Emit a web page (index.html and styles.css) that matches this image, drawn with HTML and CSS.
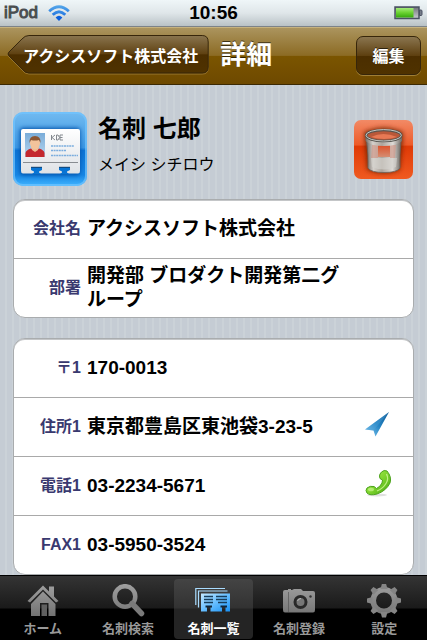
FILE: index.html
```html
<!DOCTYPE html>
<html lang="ja">
<head>
<meta charset="utf-8">
<meta name="viewport" content="width=device-width, initial-scale=1">
<title>詳細</title>
<link rel="stylesheet" href="styles.css">
</head>
<body>
<div class="app">
  <div class="status">
    <div class="carrier">
      <span>iPod</span>
      <svg class="wifi" viewBox="0 0 22 16" aria-hidden="true">
        <defs><linearGradient id="wf" x1="0" y1="0" x2="0" y2="16" gradientUnits="userSpaceOnUse"><stop offset="0" stop-color="#57a9ea"/><stop offset="1" stop-color="#0b5fdc"/></linearGradient></defs>
        <g fill="none" stroke="url(#wf)" stroke-width="2.800"><path d="M1.200 6.200Q11-2.800 20.800 6.200"/><path d="M4.700 9.800Q11 3.600 17.300 9.800"/></g>
        <path d="M7.600 12.500Q11 9 14.400 12.500L11 16Z" fill="#0b5fdc"/>
      </svg>
    </div>
    <span class="clock">10:56</span>
    <svg class="battery" viewBox="0 0 29 14" aria-hidden="true">
      <defs>
        <linearGradient id="bg" x1="0" y1="0" x2="0" y2="1"><stop offset="0" stop-color="#a5ea7c"/><stop offset=".45" stop-color="#6fd435"/><stop offset="1" stop-color="#35a80c"/></linearGradient>
        <linearGradient id="be" x1="0" y1="0" x2="0" y2="1"><stop offset="0" stop-color="#6f7277"/><stop offset="1" stop-color="#c9ccd2"/></linearGradient>
      </defs>
      <rect x="1" y="1" width="24" height="11.500" fill="url(#be)" stroke="#4a5162" stroke-width="1.500"/>
      <rect x="2" y="2" width="17.500" height="9.500" fill="url(#bg)"/>
      <path d="M25.500 4h1.500q1 0 1 1v3.500q0 1-1 1h-1.500z" fill="#777d89" stroke="#4a5162"/>
    </svg>
  </div>

  <header class="nav">
    <button class="back" type="button">
      <svg class="back-shape" viewBox="0 0 203 40" preserveAspectRatio="none" aria-hidden="true">
        <defs><linearGradient id="bk" x1="0" y1="0" x2="0" y2="1"><stop offset="0" stop-color="#8a754f"/><stop offset=".5" stop-color="#5e4010"/><stop offset=".51" stop-color="#4b2e00"/><stop offset="1" stop-color="#4f3200"/></linearGradient></defs>
        <path d="M22 2H196Q202 2 202 8V33Q202 39 196 39H22Q18 39 15 35L2 22Q0 20 2 18L15 6Q18 2 22 2Z" fill="none" stroke="#b49450" stroke-opacity=".6"/>
        <path d="M22 .5H196Q202 .5 202 7V32Q202 38 196 38H22Q18 38 15 34L2 21Q0 19 2 17L15 4Q18 .5 22 .5Z" fill="url(#bk)" stroke="#37260a"/>
      </svg>
      <span class="back-label">アクシスソフト株式会社</span>
    </button>
    <h1 class="title">詳細</h1>
    <button class="edit" type="button">編集</button>
  </header>

  <main class="content">
    <section class="profile">
      <svg class="card-icon" viewBox="0 0 74 74" role="img" aria-label="名刺">
        <defs>
          <linearGradient id="ci" x1="0" y1="0" x2="0" y2="1"><stop offset="0" stop-color="#72baf0"/><stop offset=".48" stop-color="#3b98e4"/><stop offset=".52" stop-color="#0b73d4"/><stop offset=".85" stop-color="#1686e4"/><stop offset="1" stop-color="#41b4ff"/></linearGradient>
          <linearGradient id="cp" x1="0" y1="0" x2="0" y2="1"><stop offset="0" stop-color="#fff"/><stop offset="1" stop-color="#dfe2e6"/></linearGradient>
          <linearGradient id="ph" x1="0" y1="0" x2="0" y2="1"><stop offset="0" stop-color="#79acd9"/><stop offset="1" stop-color="#b6d5ee"/></linearGradient>
          <filter id="cs" x="-20%" y="-20%" width="140%" height="150%"><feGaussianBlur stdDeviation="2"/></filter>
        </defs>
        <rect width="74" height="74" rx="10" fill="url(#ci)"/>
        <rect x="1" y="1" width="72" height="72" rx="9" fill="none" stroke="#72c5ff" stroke-width="2" stroke-opacity=".7"/>
        <rect x="7" y="16" width="60" height="47" rx="3" fill="#0350a8" filter="url(#cs)"/>
        <path d="M10 17H65Q67 17 67 19V59Q67 61.500 65 61.500H10Q8 61.500 8 59V19Q8 17 10 17Z" fill="url(#cp)"/>
        <path d="M10 50.500H65" stroke="#888c91"/>
        <path d="M18 55H29V58L26 59.500V60.500L28 62H19L21 60.500V59.500L18 58ZM46 55H57V58L54 59.500V60.500L56 62H47L49 60.500V59.500L46 58Z" fill="#0874d4"/>
        <path d="M18 55.300H29M46 55.300H57" stroke="#15436f"/>
        <rect x="12" y="21" width="20" height="24" fill="url(#ph)"/>
        <path d="M12.500 45V41Q13 38 18 36.500L22 39L26 36.500Q31 38 31.500 41V45Z" fill="#c4282e"/>
        <path d="M18 35H26L25 38L22 40L19 38Z" fill="#efba91"/>
        <ellipse cx="22" cy="31" rx="5" ry="6.500" fill="#f3c39b"/>
        <path d="M16.500 31Q16 24 22 24Q28 24 27.500 31L26 28Q22 29 18 28Z" fill="#8a5634"/>
        <g fill="none" stroke="#84898f"><path d="M38.500 23v5M42 23l-3 2.500 3 2.500M43.500 23v5h1.500q3-2.500 0-5zM50 23h-3v5h3M47 25.500h2.500"/></g>
        <path d="M38 34H61M38 38.500H53M38 43.500H65" stroke="#7badde" stroke-width="1.500" stroke-dasharray="2 .6"/>
      </svg>
      <div class="who">
        <h2 class="name">名刺 七郎</h2>
        <p class="kana">メイシ シチロウ</p>
      </div>
      <button class="trash" type="button" aria-label="削除">
        <svg viewBox="0 0 59 59" aria-hidden="true">
          <defs>
            <linearGradient id="tr" x1="0" y1="0" x2="0" y2="1"><stop offset="0" stop-color="#f28a66"/><stop offset=".42" stop-color="#ed5b29"/><stop offset=".45" stop-color="#df3a06"/><stop offset="1" stop-color="#f05a20"/></linearGradient>
            <linearGradient id="tb" x1="0" y1="0" x2="1" y2="0"><stop offset="0" stop-color="#716b66"/><stop offset=".2" stop-color="#d5d1cc"/><stop offset=".45" stop-color="#aca49c"/><stop offset=".75" stop-color="#dedbd7"/><stop offset="1" stop-color="#6d6963"/></linearGradient>
            <linearGradient id="tg" x1="0" y1="0" x2="0" y2="1"><stop offset="0" stop-color="#dc4f27"/><stop offset="1" stop-color="#d58d72"/></linearGradient>
            <filter id="ts" x="-30%" y="-30%" width="160%" height="160%"><feGaussianBlur stdDeviation="2"/></filter>
          </defs>
          <rect width="59" height="59" rx="7" fill="url(#tr)"/>
          <path d="M10 12Q30 3 49 12V20L46 50Q30 57 13 50Z" fill="#6d2005" opacity=".8" filter="url(#ts)"/>
          <path d="M12.500 20H47Q45.500 36 46 48Q43 52.500 30 52.500Q17 52.500 14 48Q14.500 36 12.500 20Z" fill="url(#tb)" stroke="#69625c" stroke-width=".8"/>
          <rect x="24" y="25" width="12" height="12" fill="url(#tg)"/>
          <path d="M18 25H24V38H17M36 25H42L41 38H36" fill="#cf9585" opacity=".65"/>
          <path d="M17 38H43L42 47Q30 52 18 47Z" fill="#d4d2ce" opacity=".65"/>
          <path d="M11.500 15V21Q17 26 30 26Q43 26 48 21V15Z" fill="url(#tb)"/>
          <ellipse cx="29.700" cy="15.500" rx="17.500" ry="5.500" fill="#b95839" stroke="#55544f" stroke-width="2.600"/>
          <ellipse cx="29.700" cy="15.300" rx="17.700" ry="5.700" fill="none" stroke="#c8c8c3"/>
          <path d="M17 17Q29 11 43 17Q30 21 17 17Z" fill="#e77954"/>
        </svg>
      </button>
    </section>

    <dl class="group">
      <div class="row"><dt>会社名</dt><dd>アクシスソフト株式会社</dd></div>
      <div class="row"><dt>部署</dt><dd>開発部 ブロダクト開発第二グループ</dd></div>
    </dl>

    <dl class="group">
      <div class="row"><dt>〒1</dt><dd>170-0013</dd></div>
      <div class="row"><dt>住所1</dt><dd>東京都豊島区東池袋3-23-5</dd>
        <dd class="action"><button type="button" aria-label="地図">
          <svg viewBox="0 0 26 28" aria-hidden="true">
            <defs><linearGradient id="ar" x1="1" y1="0" x2="0" y2="1"><stop offset="0" stop-color="#115a94"/><stop offset=".5" stop-color="#2485c5"/><stop offset="1" stop-color="#8ccdf2"/></linearGradient></defs>
            <path d="M24 2L10.500 26.500L8.500 20.500L0 19.500Z" fill="url(#ar)"/>
            <path d="M24 2L8.500 20.500L0 19.500Z" fill="#59aadd" opacity=".3"/>
          </svg></button></dd>
      </div>
      <div class="row"><dt>電話1</dt><dd>03-2234-5671</dd>
        <dd class="action"><button type="button" aria-label="電話">
          <svg viewBox="0 0 26 28" aria-hidden="true">
            <defs><linearGradient id="tl" x1="0" y1="0" x2="1" y2="1"><stop offset="0" stop-color="#b5ef61"/><stop offset=".5" stop-color="#7fd52e"/><stop offset="1" stop-color="#45a312"/></linearGradient></defs>
            <ellipse cx="12" cy="26" rx="10" ry="1.500" fill="#999" opacity=".3"/>
            <path d="M16.500 3Q19 .5 22 2Q27 8 25 14Q21 22 12 25Q5 27 2 24Q0 21.500 2 19Q5 16.500 9 17.500L11.500 19.500Q15 18 17 14L17.500 11Q14 10 14.500 7Q14.500 5 16.500 3Z" fill="url(#tl)" stroke="#4da31d"/>
            <path d="M21.500 5Q24 10 21 14.500Q18 19.500 12 22" fill="none" stroke="#d2fa9b" stroke-width="1.300" opacity=".8"/>
            <ellipse cx="6" cy="20.500" rx="3" ry="1.800" fill="#c9f58d" opacity=".7"/>
          </svg></button></dd>
      </div>
      <div class="row"><dt>FAX1</dt><dd>03-5950-3524</dd></div>
    </dl>
  </main>

  <nav class="tabs">
    <a class="tab" href="#home">
      <svg viewBox="0 0 36 34" aria-hidden="true">
        <defs><linearGradient id="gr" x1="0" y1="0" x2="0" y2="34" gradientUnits="userSpaceOnUse"><stop offset="0" stop-color="#a0a0a0"/><stop offset="1" stop-color="#707070"/></linearGradient></defs>
        <path d="M18 1.500L24 7.500V2.500H29V12.500L33.500 17L31 18.500L18 5.500L5 18.500L2.500 17Z" fill="url(#gr)"/>
        <path d="M18 7.500L30.500 20V32H23.500V19H15V32H6V20Z" fill="url(#gr)"/>
        <rect x="16.500" y="20.500" width="5.500" height="11.500" fill="#606060"/>
      </svg>
      <span>ホーム</span>
    </a>
    <a class="tab" href="#search">
      <svg viewBox="0 0 36 34" aria-hidden="true">
        <circle cx="15" cy="12.500" r="10.300" fill="none" stroke="url(#gr)" stroke-width="4.500"/>
        <path d="M22 19.500L31.500 29.500" stroke="#7a7a7a" stroke-width="5.500" stroke-linecap="round"/>
      </svg>
      <span>名刺検索</span>
    </a>
    <a class="tab active" href="#list" aria-current="page">
      <svg viewBox="0 0 36 34" aria-hidden="true">
        <defs><linearGradient id="bl" x1="0" y1="0" x2="1" y2="1"><stop offset="0" stop-color="#c4e8ff"/><stop offset=".5" stop-color="#67beff"/><stop offset="1" stop-color="#1690f4"/></linearGradient></defs>
        <g fill="none" stroke="#a9dcff" stroke-width="1.200"><path d="M.8 21V4.500H30M3.500 23.500V7H32.500"/></g>
        <path d="M6 9.500H35V27.500H30.500V22.500H27V27.500H15.500V22.500H12V27.500H6Z" fill="url(#bl)"/>
        <path d="M9 12.500H18M9 15.500H18M9 18.500H18M21 12.500H32M21 15.500H32M23 18.500H32" stroke="#173d5b" stroke-width="1.400"/>
        <path d="M10.500 22.500H17M25.500 22.500H32" stroke="#10273b" stroke-width="2"/>
      </svg>
      <span>名刺一覧</span>
    </a>
    <a class="tab" href="#add">
      <svg viewBox="0 0 36 34" aria-hidden="true">
        <path d="M2 8.500V8Q2 6 4 6L7 6V5H10V6H11L13 5H20L22 7H32Q34 7 34 9V26Q34 28.500 32 28.500H4Q2 28.500 2 26Z" fill="url(#gr)"/>
        <path d="M7.500 8V28" stroke="#555" stroke-opacity=".7"/>
        <circle cx="19.500" cy="18" r="5.500" fill="#777" stroke="#292929" stroke-width="3"/>
        <path d="M16.500 17Q17.500 14.500 20 14.500" fill="none" stroke="#bbb"/>
        <circle cx="29.500" cy="12.500" r="1.200" fill="#333"/>
      </svg>
      <span>名刺登録</span>
    </a>
    <a class="tab" href="#settings">
      <svg viewBox="0 0 36 34" aria-hidden="true">
        <circle cx="18" cy="16.500" r="10.800" fill="none" stroke="url(#gr)" stroke-width="5.600"/>
        <g fill="#858585">
          <path id="tooth" d="M14.500 5L16 -.5H20L21.500 5Z"/>
          <use href="#tooth" transform="rotate(45 18 16.500)"/>
          <use href="#tooth" transform="rotate(90 18 16.500)"/>
          <use href="#tooth" transform="rotate(135 18 16.500)"/>
          <use href="#tooth" transform="rotate(180 18 16.500)"/>
          <use href="#tooth" transform="rotate(225 18 16.500)"/>
          <use href="#tooth" transform="rotate(270 18 16.500)"/>
          <use href="#tooth" transform="rotate(315 18 16.500)"/>
        </g>
      </svg>
      <span>設定</span>
    </a>
  </nav>
</div>
</body>
</html>
```
FILE: styles.css
```css
* {
  box-sizing: border-box;
}

body {
  margin: 0;
  font-family: "Liberation Sans", "Noto Sans CJK JP", sans-serif;
  color: #000;
}

h1, h2, p, dl, dd {
  margin: 0;
}

button {
  padding: 0;
  border: 0;
  background: none;
  font: inherit;
  color: inherit;
}

svg {
  display: block;
}

.app {
  display: flex;
  flex-direction: column;
  height: 100vh;
  overflow: hidden;
}

.status {
  display: grid;
  grid-template-columns: 1fr auto 1fr;
  align-items: center;
  flex: none;
  height: 27px;
  padding: 0 4px;
  border-bottom: 1px solid #7d8388;
  background: linear-gradient(#eff6f8, #dfe6e9 50%, #b9c2c6);
  font-size: 19px;
  font-weight: bold;
  line-height: 24px;
}

.carrier {
  display: flex;
  align-items: center;
  gap: 10px;
  color: #4a4d50;
  font-size: 17px;
  font-weight: normal;
  -webkit-text-stroke: 1px #4a4d50;
}

.wifi {
  width: 22px;
  height: 16px;
}

.battery {
  justify-self: end;
  width: 29px;
  height: 14px;
}

.nav {
  display: flex;
  align-items: center;
  flex: none;
  height: 58px;
  padding: 0 6px 2px 7px;
  border-top: 1px solid #c6b27e;
  border-bottom: 1px solid #3c2903;
  background: linear-gradient(#ab945e, #8c6b24 49%, #7b5500 50%, #6e4900);
  color: #fff;
  font-size: 16px;
  font-weight: bold;
  text-shadow: 0 -1px 0 rgba(0, 0, 0, .6);
}

.back {
  position: relative;
  height: 40px;
  padding: 0 11px 0 16px;
}

.back-shape {
  position: absolute;
  inset: 0;
  width: 100%;
  height: 100%;
}

.back-label {
  position: relative;
}

.title {
  flex: 1;
  padding-left: 11px;
  font-size: 26px;
  line-height: 40px;
}

.edit {
  width: 65px;
  height: 39px;
  border: 1px solid #37260a;
  border-radius: 7px;
  background: linear-gradient(#8a754f, #5e4010 50%, #4b2e00 51%, #4f3200);
  box-shadow: 0 1px 0 rgba(190, 160, 90, .6);
  text-shadow: inherit;
}

.content {
  flex: 1;
  min-height: 0;
  padding: 27px 13px 0;
  overflow-y: auto;
  scrollbar-width: none;
  background: repeating-linear-gradient(90deg, #c5ccd4 0 5px, #cbd2d8 5px 7px);
}

.profile {
  display: flex;
  align-items: flex-start;
  margin-bottom: 13px;
  padding-right: 1px;
}

.card-icon {
  flex: none;
  width: 74px;
  height: 74px;
}

.who {
  flex: 1;
  padding: 0 11px;
}

.name {
  font-size: 24px;
  line-height: 34px;
}

.kana {
  padding-top: 7px;
  font-size: 16px;
  line-height: 24px;
}

.trash {
  align-self: center;
  flex: none;
  width: 59px;
  height: 59px;
}

.group {
  margin-bottom: 20px;
  border: 1px solid #a9acae;
  border-radius: 12px;
  background: #fff;
  box-shadow: inset 0 1px 0 #c4c6c8;
}

.row {
  display: grid;
  grid-template-columns: 67px minmax(0, 1fr) 60px;
  align-items: center;
  column-gap: 6px;
  min-height: 59px;
  border-bottom: 1px solid #a9a9a9;
}

.row:last-child {
  min-height: 58px;
  border-bottom: 0;
}

.row dt {
  color: #39396f;
  font-size: 16px;
  font-weight: bold;
  line-height: 24px;
  text-align: right;
}

.row dd {
  font-size: 19px;
  font-weight: bold;
  line-height: 24px;
}

.row .action {
  padding-left: 12px;
}

.action svg {
  width: 26px;
  height: 28px;
}

.tabs {
  display: grid;
  grid-template-columns: repeat(5, 1fr);
  flex: none;
  height: 65px;
  padding: 3px 0;
  border-top: 1px solid #000;
  background: linear-gradient(#343434, #1a1a1a 32px, #000 33px);
}

.tab {
  display: flex;
  flex-direction: column;
  align-items: center;
  gap: 1px;
  margin: 0 3px;
  padding-top: 5px;
  border-radius: 4px;
  color: #999;
  font-size: 13px;
  font-weight: bold;
  line-height: 20px;
  text-decoration: none;
}

.tab svg {
  width: 36px;
  height: 34px;
}

.tab.active {
  background: linear-gradient(#444, #323232 29px, #242424 30px);
  color: #fff;
}
```
